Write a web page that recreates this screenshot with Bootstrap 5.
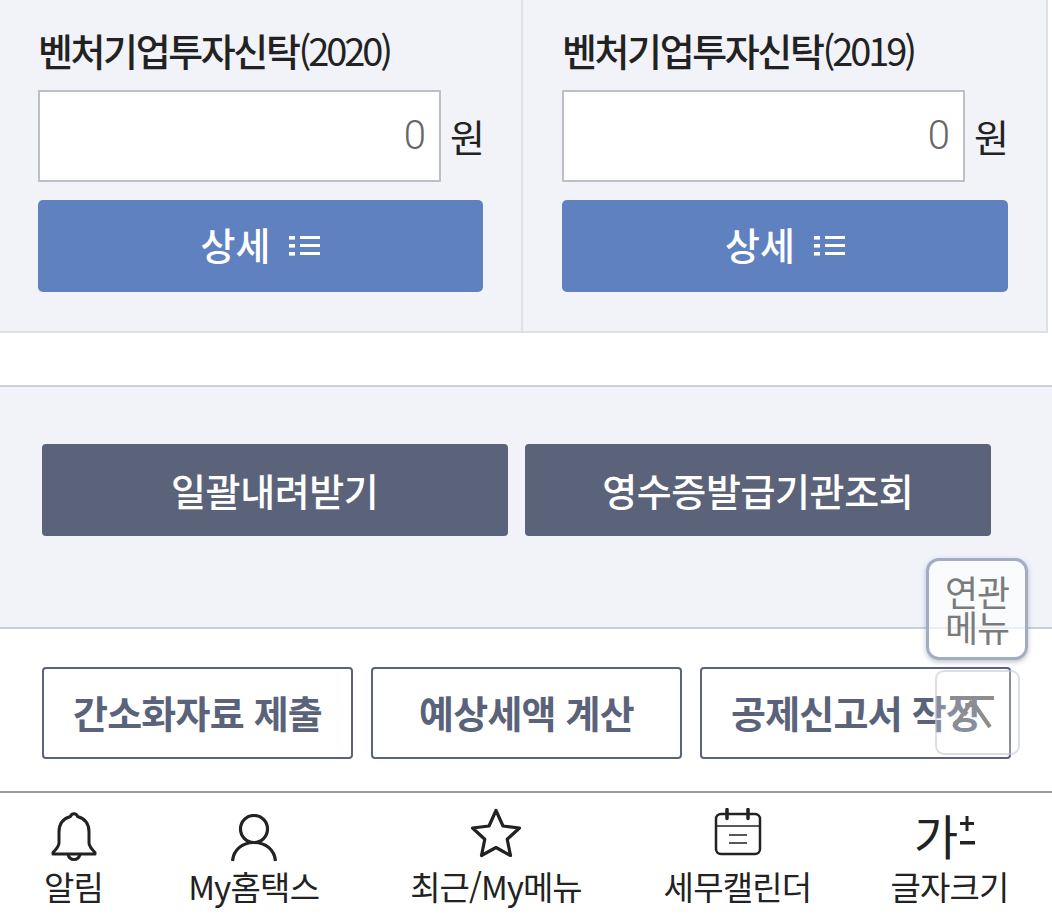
<!DOCTYPE html>
<html lang="ko">
<head>
<meta charset="utf-8">
<title>벤처기업투자신탁</title>
<link href="https://cdn.jsdelivr.net/npm/bootstrap@5.3.0/dist/css/bootstrap.min.css" rel="stylesheet">
<style>
html,body{height:924px;overflow:hidden}
body{position:relative;background:#fff;font-family:"Noto Sans CJK KR","Noto Sans",sans-serif;color:#222}
.fund-grid{width:1048px;height:333px;background:#f1f3f9;border-bottom:2px solid #dde0e5;border-right:2px solid #dde0e5}
.fund-cell{padding:24px 0 0 38px;height:331px}
.fund-cell-l{width:523px;border-right:2px solid #dde0e5}
.fund-cell-r{width:523px;padding-left:39px}
.fund-title{font-size:38px;font-weight:500;letter-spacing:-2.4px;line-height:52px;margin:0 0 14px;white-space:nowrap;color:#222}
.fund-year{font-weight:400;letter-spacing:-3.100px}
.fund-input{width:403px;height:92px;border:2px solid #bcbfc4;border-radius:1px;background:#fff;font-family:Roboto,sans-serif;font-size:40px;font-weight:300;color:#666;padding:0 13px 0 0;display:flex;align-items:center;justify-content:flex-end}
.fund-unit{font-size:38px;line-height:1;margin-left:9px;color:#222}
.fund-btn{width:445px;height:92px;margin-top:18px;background:#5f81c0;border:0;border-radius:5px;color:#fff;font-size:38px;font-weight:500;display:flex;align-items:center;justify-content:center;gap:18px}
.fund-cell-r .fund-btn{width:446px}
.fund-btn span{position:relative;top:-3px}
.band{margin-top:52px;height:244px;background:#f1f3f9;border-top:2px solid #c9cfdf;border-bottom:2px solid #c9cfdf;padding:57px 0 0 42px}
.band-btn{width:465.500px;height:92px;background:#5a6379;border:0;border-radius:4px;color:#fff;font-size:38px;font-weight:500;display:flex;align-items:center;justify-content:center;letter-spacing:-.4px;padding:0 0 2px}
.band-btns{gap:17.500px}
.outline-row{padding:38px 0 0 42px;height:162px;gap:18px}
.outline-btn{width:311px;height:92px;background:#fff;border:2px solid #5a6379;border-radius:4px;color:#5a6379;font-size:38px;font-weight:600;display:flex;align-items:center;justify-content:center;letter-spacing:-.8px;white-space:nowrap;padding:0 0 4px}
.dock{border-top:2px solid #9a9a9a;height:134px;padding:0 0 0 44px;background:#fff}
.dock-item{display:flex;flex-direction:column;align-items:center;color:#222;font-size:33px;line-height:44px;letter-spacing:-.8px;white-space:nowrap}
.dock-item-my{margin-left:85px}
.dock-item-recent{margin-left:91px;letter-spacing:-1px}
.dock-item-cal{margin-left:82px}
.dock-item-size{margin-left:79px}
.dock-icon{height:71px;padding-top:15px;display:flex;align-items:flex-start;justify-content:center}
.dock-icon-bell{padding-top:17px}
.dock-icon-user{padding-top:21px}
.dock-size{font-size:48px;font-weight:400;line-height:46px;letter-spacing:0;color:#222;display:flex;margin:3px 9px 0 0}
.float-rel{position:absolute;left:926px;top:558px;width:102px;height:102px;background:rgba(255,255,255,.62);border:3px solid #a3acc0;border-radius:13px;box-shadow:0 2px 5px rgba(70,80,110,.35);color:#7b7b7b;font-size:36px;line-height:35px;font-weight:400;display:flex;align-items:center;justify-content:center;text-align:center;letter-spacing:-1px}
.float-top{position:absolute;left:935px;top:670px;width:85px;height:85px;background:rgba(255,255,255,.28);border:2px solid rgba(190,195,205,.55);border-radius:9px}
.float-top svg{display:block;margin:24px 0 0 11px}
</style>
</head>
<body>
<div class="fund-grid d-flex">
  <div class="fund-cell fund-cell-l">
    <h2 class="fund-title">벤처기업투자신탁<span class="fund-year">(2020)</span></h2>
    <div class="d-flex align-items-center"><div class="fund-input">0</div><span class="fund-unit">원</span></div>
    <button class="fund-btn" type="button"><span>상세</span>
      <svg width="32" height="24" viewBox="0 0 32 24" fill="#fff"><rect x="1" y="2" width="6" height="3.600"/><rect x="1" y="10" width="6" height="3.600"/><rect x="1" y="18" width="6" height="3.600"/><rect x="12" y="2" width="20" height="3"/><rect x="12" y="10" width="20" height="3"/><rect x="12" y="18" width="20" height="3"/></svg>
    </button>
  </div>
  <div class="fund-cell fund-cell-r">
    <h2 class="fund-title">벤처기업투자신탁<span class="fund-year">(2019)</span></h2>
    <div class="d-flex align-items-center"><div class="fund-input">0</div><span class="fund-unit">원</span></div>
    <button class="fund-btn" type="button"><span>상세</span>
      <svg width="32" height="24" viewBox="0 0 32 24" fill="#fff"><rect x="1" y="2" width="6" height="3.600"/><rect x="1" y="10" width="6" height="3.600"/><rect x="1" y="18" width="6" height="3.600"/><rect x="12" y="2" width="20" height="3"/><rect x="12" y="10" width="20" height="3"/><rect x="12" y="18" width="20" height="3"/></svg>
    </button>
  </div>
</div>
<div class="band">
  <div class="d-flex band-btns">
    <button class="band-btn" type="button">일괄내려받기</button>
    <button class="band-btn" type="button">영수증발급기관조회</button>
  </div>
</div>
<div class="d-flex outline-row">
  <button class="outline-btn" type="button">간소화자료 제출</button>
  <button class="outline-btn" type="button">예상세액 계산</button>
  <button class="outline-btn" type="button">공제신고서 작성</button>
</div>
<nav class="d-flex dock">
  <div class="dock-item"><div class="dock-icon dock-icon-bell">
    <svg width="46" height="52" viewBox="0 0 46 52" fill="none" stroke="#222" stroke-width="3" stroke-linejoin="round"><path d="M19.500 6.500a3.600 3.600 0 0 1 7 0C34 8.500 38 14 38 22v11c0 3 2.500 6 6 9.500v1.500H2v-1.500C5.500 39 8 36 8 33V22C8 14 12 8.500 19.500 6.500Z"/><path d="M17 44.500c1 3.500 3 5 6 5s5-1.500 6-5"/></svg>
  </div>알림</div>
  <div class="dock-item dock-item-my"><div class="dock-icon dock-icon-user">
    <svg width="46" height="48" viewBox="0 0 46 48" fill="none" stroke="#222" stroke-width="3.200"><circle cx="23" cy="15" r="13.500"/><path d="M1.500 47C2.500 36 11 28.500 23 28.500s20.500 7.500 21.500 18.500"/></svg>
  </div>My홈택스</div>
  <div class="dock-item dock-item-recent"><div class="dock-icon">
    <svg width="52" height="50" viewBox="0 0 52 50" fill="none" stroke="#222" stroke-width="3.200" stroke-linejoin="round"><path d="M26 2.500l7 15.500 16.500 2-12.300 11.200L40.500 47.500 26 39.500 11.500 47.500l3.300-16.300L2.500 20 19 18Z"/></svg>
  </div>최근/My메뉴</div>
  <div class="dock-item dock-item-cal"><div class="dock-icon">
    <svg width="48" height="48" viewBox="0 0 48 48" fill="none" stroke="#222" stroke-width="2.500"><rect x="2" y="6" width="44" height="40" rx="5"/><path d="M2 18h44" stroke-width="1.500"/><path d="M13 1.500v9M34 1.500v9" stroke-width="3.500" stroke-linecap="round"/><path d="M15 27h18M15 35h18" stroke-width="1.500"/></svg>
  </div>세무캘린더</div>
  <div class="dock-item dock-item-size"><div class="dock-icon"><span class="dock-size">가<svg width="18" height="36" viewBox="0 0 18 36" fill="#222" class="mt-1"><rect x="7.500" y="1" width="3" height="15"/><rect x="2" y="7" width="14" height="3"/><rect x="2" y="26" width="15" height="3.500"/></svg></span></div>글자크기</div>
</nav>
<div class="float-rel">연관<br>메뉴</div>
<div class="float-top">
  <svg width="48" height="36" viewBox="0 0 48 36" fill="none" stroke="#8d8d8d" stroke-width="4"><path d="M2 2h44M24 5 6 31M24 5l18 26"/></svg>
</div>
</body>
</html>
